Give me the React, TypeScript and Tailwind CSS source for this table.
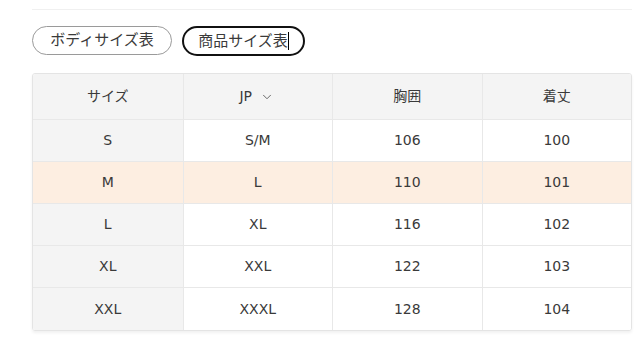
import { ChevronDown } from 'lucide-react'

const rows = [
    { size: 'S', jp: 'S/M', chest: '106', length: '100' },
    { size: 'M', jp: 'L', chest: '110', length: '101', active: true },
    { size: 'L', jp: 'XL', chest: '116', length: '102' },
    { size: 'XL', jp: 'XXL', chest: '122', length: '103' },
    { size: 'XXL', jp: 'XXXL', chest: '128', length: '104' },
]

const font = { fontFamily: '"DejaVu Sans", "Noto Sans CJK JP", sans-serif' }

export default function App() {
    return (
        <div className="w-[640px] h-[360px] bg-white pt-[9px] pl-[32px] pr-[8px] text-[#3a3a3a]" style={font}>
            <div className="border-t border-[#f0f0f0]" />
            <div className="flex gap-[10px] mt-[16px]">
                <button className="w-[140px] h-[29px] rounded-full border border-[#9a9a9a] text-[15px] text-[#3a3a3a] bg-white">
                    ボディサイズ表
                </button>
                <button className="w-[123px] h-[30px] rounded-full border-2 border-[#111] text-[15px] text-[#3a3a3a] bg-white flex items-center justify-center">
                    商品サイズ表
                    <span className="inline-block w-px h-[18px] bg-black" />
                </button>
            </div>
            <div className="mt-[17px] w-[600px] border border-[#e4e4e4] rounded-[3px] overflow-hidden shadow-[0_2px_3px_rgba(0,0,0,0.06)] text-[14px]">
                <div className="grid grid-cols-4 h-[46px] bg-[#f4f4f4] border-b border-[#e8e8e8]">
                    <div className="flex items-center justify-center">サイズ</div>
                    <div className="flex items-center justify-center gap-[8px] border-l border-[#e8e8e8] pr-[2px]">
                        <span>JP</span>
                        <ChevronDown size={14} strokeWidth={1.5} className="text-[#555] mt-[1px]" />
                    </div>
                    <div className="flex items-center justify-center border-l border-[#e8e8e8]">胸囲</div>
                    <div className="flex items-center justify-center border-l border-[#e8e8e8]">着丈</div>
                </div>
                {rows.map((r, i) => (
                    <div
                        key={r.size}
                        className={`grid grid-cols-4 h-[42px] ${i < rows.length - 1 ? 'border-b border-[#e8e8e8]' : ''} ${r.active ? 'bg-[#fdeee1]' : 'bg-white'}`}
                    >
                        <div className={`flex items-center justify-center ${r.active ? '' : 'bg-[#f4f4f4]'}`}>{r.size}</div>
                        <div className="flex items-center justify-center border-l border-[#e8e8e8]">{r.jp}</div>
                        <div className="flex items-center justify-center border-l border-[#e8e8e8]">{r.chest}</div>
                        <div className="flex items-center justify-center border-l border-[#e8e8e8]">{r.length}</div>
                    </div>
                ))}
            </div>
        </div>
    )
}
